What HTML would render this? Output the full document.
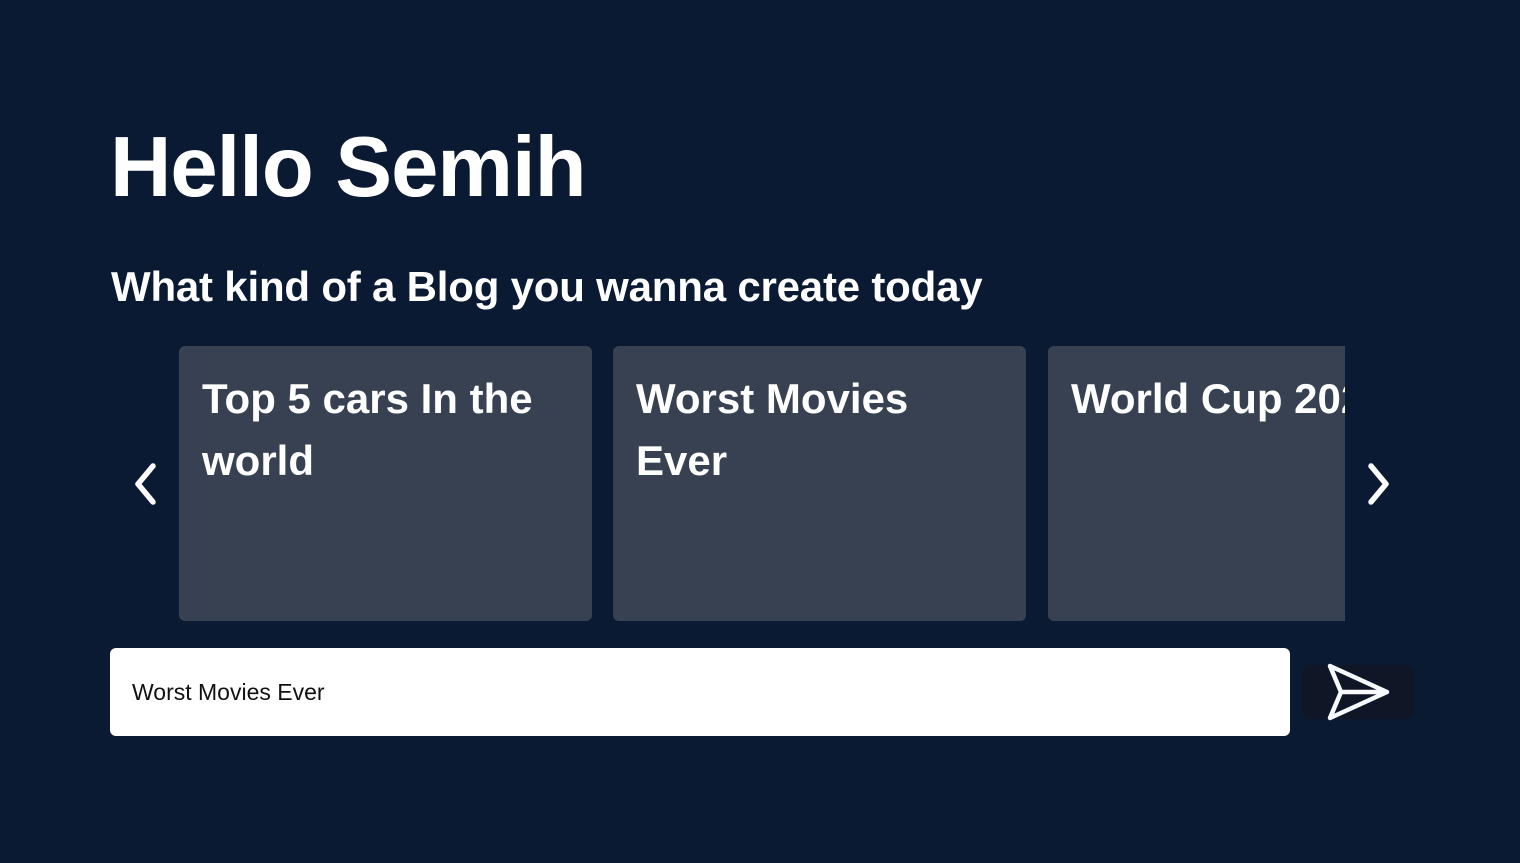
<!DOCTYPE html>
<html><head><style>
body{margin:0;width:1520px;height:863px;background:#0b1a33;font-family:"Liberation Sans",sans-serif;overflow:hidden;position:relative;color:#fff}
h1{position:absolute;left:110px;top:118px;margin:0;font-size:85px;font-weight:700;line-height:100px;letter-spacing:-1px}
h2{position:absolute;left:111px;top:262px;margin:0;font-size:42px;font-weight:700;line-height:50px;letter-spacing:-0.2px}
.wrap{position:absolute;left:179px;top:346px;width:1166px;height:275px;overflow:hidden}
.card{position:absolute;top:0;width:413px;height:275px;background:#384152;border-radius:6px;box-sizing:border-box;padding:22px 23px;font-size:42px;font-weight:700;line-height:62px}
.card span{display:block;width:350px}
.inp{position:absolute;left:110px;top:648px;width:1180px;height:88px;background:#fff;border-radius:6px;color:#111;font-size:23px;line-height:88px;padding-left:22px;box-sizing:border-box}
.btn{position:absolute;left:1302px;top:665px;width:112px;height:54px;background:#0f1727;border-radius:8px}
</style></head><body>
<h1>Hello Semih</h1>
<h2>What kind of a Blog you wanna create today</h2>
<svg style="position:absolute;left:128px;top:460px" width="36" height="48"><path d="M25 6 L10 24 L25 42" stroke="#fff" stroke-width="5.5" fill="none" stroke-linecap="round" stroke-linejoin="round"/></svg>
<div class="wrap">
<div class="card" style="left:0"><span>Top 5 cars In the world</span></div>
<div class="card" style="left:434px"><span>Worst Movies Ever</span></div>
<div class="card" style="left:869px;white-space:nowrap">World Cup 2022</div>
</div>
<svg style="position:absolute;left:1362px;top:460px" width="36" height="48"><path d="M9 6 L24 24 L9 42" stroke="#fff" stroke-width="5.5" fill="none" stroke-linecap="round" stroke-linejoin="round"/></svg>
<div class="inp">Worst Movies Ever</div>
<div class="btn"></div>
<svg style="position:absolute;left:1324px;top:660px" width="70" height="64"><path d="M6 6 L63 32 L6 58 L17 32 Z M17 32 L63 32" stroke="#f8f9fc" stroke-width="4.5" fill="none" stroke-linejoin="round" stroke-linecap="round"/></svg>
</body></html>
